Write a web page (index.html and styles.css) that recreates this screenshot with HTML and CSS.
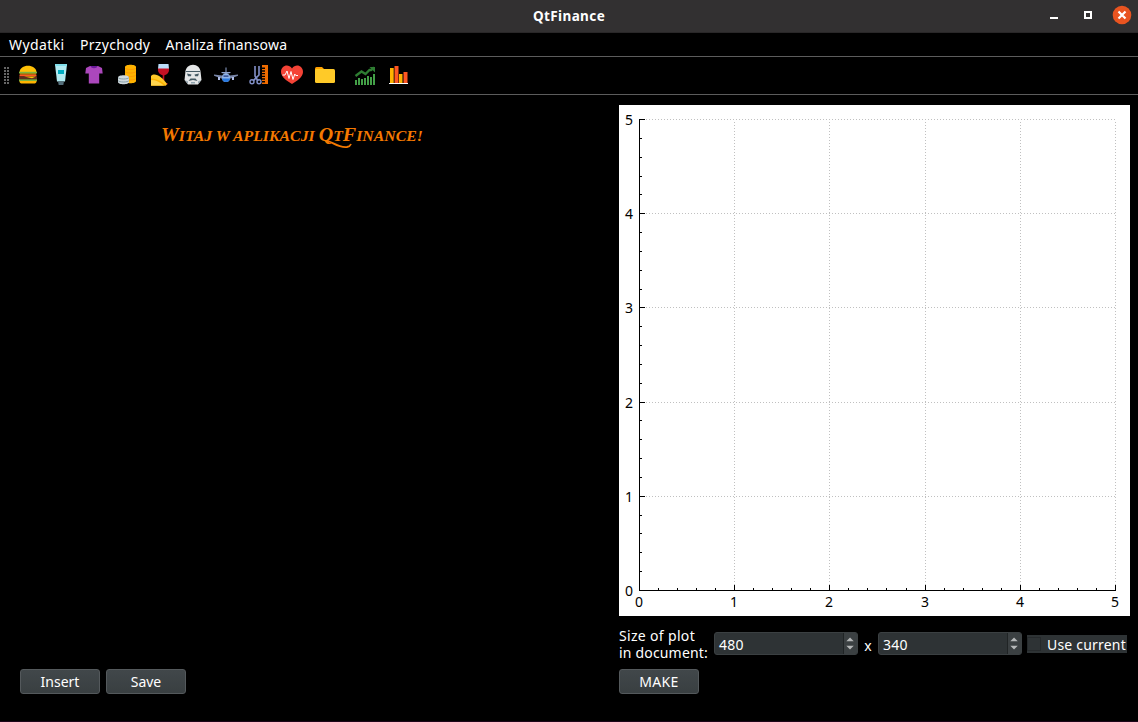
FILE: index.html
```html
<!DOCTYPE html>
<html lang="pl">
<head>
<meta charset="utf-8">
<title>QtFinance</title>
<link rel="stylesheet" href="styles.css">
</head>
<body>
<div class="window">
  <header class="titlebar">
    <span></span>
    <h1 class="title">QtFinance</h1>
    <div class="controls">
      <svg width="100" height="33" viewBox="0 0 100 33">
        <path fill="#fff" d="M12 17h8v2h-8z"/>
        <path fill="none" stroke="#fff" stroke-width="2" d="M47 12h6v6h-6z"/>
        <circle cx="84" cy="15" r="9.3" fill="#e95420"/>
        <path stroke="#fff" stroke-width="2.2" d="M80.5 11.5l7 7m0-7l-7 7"/>
      </svg>
    </div>
  </header>
  <nav class="menubar"><span class="menu m1">Wydatki</span><span class="menu m2">Przychody</span><span class="menu m3">Analiza finansowa</span></nav>
  <div class="toolbar">
    <svg class="grip" width="6" height="17" viewBox="0 0 6 17"><path fill="#666" d="M0 0h2v2H0zM3 0h2v2H3zM0 3h2v2H0zM3 3h2v2H3zM0 6h2v2H0zM3 6h2v2H3zM0 9h2v2H0zM3 9h2v2H3zM0 12h2v2H0zM3 12h2v2H3zM0 15h2v2H0zM3 15h2v2H3z"/></svg>
    <!-- food -->
    <svg class="icon" viewBox="0 0 24 24"><path fill="#ffc107" d="M3.5 9.500c0-9 17-9 17 0z"/><path fill="#7cb342" d="M3 8.800h18v1.700H3z"/><path fill="#ffc107" d="M4 10.500h16v1H4z"/><path fill="#ff5722" d="M3.5 11.500h17v2h-17z"/><path fill="#5d2e1f" d="M3 13.500h18v3H3z"/><path fill="#ffc107" d="M8 13.500h12l-4 1.800z"/><path fill="#7cb342" d="M3 16.300h18v2H3z"/><path fill="#ffb300" d="M3.500 18h17c0 2-1 2.500-3 2.500h-11c-2 0-3-.5-3-2.500z"/></svg>
    <!-- cosmetics -->
    <svg class="icon" viewBox="0 0 24 24"><path fill="#b2ebf2" d="M6 1.500h12l-2 17H8z"/><path fill="#80deea" d="M6 1h12v2H6z"/><path fill="#00acc1" d="M9 7h6v4H9z"/><path fill="#546e7a" d="M9 18.500h6l-.7 3.500H9.700z"/></svg>
    <!-- clothes -->
    <svg class="icon" viewBox="0 0 24 24"><path fill="#ab47bc" d="M8 3h8l4 2 .7 5.500h-3.500V20.500H6.800V10.500H3.300L4 5z"/><path fill="#6a1b9a" d="M8.500 3h7c-.5 3-6.500 3-7 0z"/></svg>
    <!-- coins -->
    <svg class="icon" viewBox="0 0 24 24"><path fill="#ffb300" d="M10 4c0-3 11-3 11 0v14c0 3-11 3-11 0z"/><path fill="none" stroke="#ff8f00" stroke-width=".7" d="M10 5c1 2 10 2 11 0M10 8.500c1 2 10 2 11 0M10 12c1 2 10 2 11 0M10 15.500c1 2 10 2 11 0"/><path fill="#cfd8dc" d="M3 14.500c0-3 11-3 11 0V19c0 3-11 3-11 0z"/><path fill="none" stroke="#78909c" stroke-width=".8" d="M3 14.500c1 2 10 2 11 0M3 17.500c1 2 10 2 11 0"/></svg>
    <!-- wine and cheese -->
    <svg class="icon" viewBox="0 0 24 24"><path fill="#bbdefb" d="M10.500 1h10l.5 5H10z"/><path fill="#c51124" d="M10 5.500h11c1 9-12 9-11 0z"/><path stroke="#c51124" stroke-width="1.600" d="M15.500 10v10M12.500 20.800h7"/><path fill="#ffc928" d="M3 13c4-4 11 1 16 8l-1 1.500H3z"/><path fill="#ffb300" d="M3 15.500c5 0 10 2 15 7H3z"/><path fill="#ffd54f" d="M3 17c5 0 9 2 13 5.500H3z"/></svg>
    <!-- entertainment -->
    <svg class="icon" viewBox="0 0 24 24"><path fill="#e4e6e7" d="M4.300 10c0-11 15.400-11 15.400 0l.8 7-3.500 4.500H7L3.500 17z"/><path fill="#455a64" d="M4.800 8h14.400v1H4.800zM6 10.500l4.500 1-.6 1.800H7zM18 10.500l-4.500 1 .6 1.800H17zM9.500 15.500h5l2 2.500-4.500-1-4.500 1z"/><path fill="#90a4ae" d="M4 17l3 1.500V21zM20 17l-3 1.500V21zM10 19h4v1.500h-4z"/></svg>
    <!-- travel -->
    <svg class="icon" viewBox="0 0 24 24"><path fill="#90a4ce" d="M11.500 4.500h1V10h-1zM7.500 9h9v1l-4.500 1-4.500-1z"/><path fill="#7986a8" d="M0 11.500l12 1.500 12-1.500v1.300L14 16.500h-4L0 12.800z"/><ellipse cx="12" cy="14.800" rx="4" ry="4.200" fill="#90b4e8"/><path fill="#2979e0" d="M8 15.500h8c-.5 4.700-7.500 4.700-8 0z"/><path fill="#1a347c" d="M9.500 12.500h5v1.200h-5z"/><path fill="#b0bee8" d="M4 14h2v3H4zM18 14h2v3h-2z"/></svg>
    <!-- hairdresser -->
    <svg class="icon" viewBox="0 0 24 24"><path fill="none" stroke="#8290c8" stroke-width="1.600" d="M8 3v10l3 5M12 3v9l-6 6"/><circle cx="5" cy="18.800" r="2" fill="none" stroke="#8290c8" stroke-width="1.400"/><circle cx="12" cy="18.800" r="2" fill="none" stroke="#8290c8" stroke-width="1.400"/><path fill="#ef6c00" d="M18 2h3v19h-6v-1.500h3V18h-3v-1.300h3v-1.400h-3V14h3v-1.300h-3v-1.400h3V10h-3V8.700h3V7.300h-3V6h3V4.500h-3V2z"/></svg>
    <!-- health -->
    <svg class="icon" viewBox="0 0 24 24"><path fill="#f44336" d="M12 5.500C8 0 1 3 1 9c0 5 6 9 11 12.000C17 18 23 14 23 9c0-6-7-9-11-3.500z"/><path fill="none" stroke="#fff" stroke-width="1" d="M2.500 12h2.500L7 8l2 7.500 2-7 2 8 1.800-5.500 1 1.500H18"/></svg>
    <!-- other -->
    <svg class="icon folder" viewBox="0 0 24 24"><path fill="#ffa000" d="M2 5.500Q2 4 3.500 4H9l2 2v5H2z"/><path fill="#ffca28" d="M3.500 6h17Q22 6 22 7.500v11q0 1.500-1.500 1.500h-17Q2 20 2 18.500v-11Q2 6 3.500 6z"/></svg>
    <!-- growth chart -->
    <svg class="icon" viewBox="0 0 24 24"><path fill="#43a047" d="M2 17h2v5H2zM5 15h2v7H5zM8 16h2v6H8zM11 15h2v7h-2zM14 13h2v9h-2zM17 14h2v8h-2zM20 11h2v11h-2z"/><path fill="none" stroke="#2e7d32" stroke-width="2.300" d="M2.500 13l6-4.500 4 2.500 4-4H18l3-2.500"/><path fill="#2e7d32" d="M16.500 4H22v5.500z"/></svg>
    <!-- bar chart -->
    <svg class="icon" viewBox="0 0 24 24"><path fill="#ffb300" d="M4 5h3.700v15H4zM13 11h3.500v9H13z"/><path fill="#ff5722" d="M8.500 3h4v17h-4zM17.500 9h4v11h-4z"/><path fill="#fff" d="M3 20h19v1H3z"/></svg>
  </div>
  <main class="content">
    <section class="document">
      <h2 class="welcome"><svg width="264" height="30" viewBox="0 0 264 30"><text class="welcome-text" x="0" y="19" textLength="262" lengthAdjust="spacingAndGlyphs"><tspan class="cap">W</tspan>ITAJ W APLIKACJI <tspan class="cap">Q</tspan>T<tspan class="cap">F</tspan>INANCE!</text><path class="swash" d="M166 18.500C173 21 178 26 186 25q3-.5 4-3"/></svg></h2>
      <div class="actions"><button class="button">Insert</button><button class="button">Save</button></div>
    </section>
    <section class="plot-panel">
      <svg class="plot" width="511" height="511" viewBox="0 0 511 511" shape-rendering="crispEdges">
        <path fill="#fff" d="M0 0h511v511H0z"/>
        <path class="grid" d="M27 14.500H497M27 108.500H497M27 202.500H497M27 297.500H497M27 391.500H497M115.500 17V480M210.500 17V480M306.500 17V480M401.500 17V480M496.500 17V480"/>
        <path class="axis" d="M20.500 14V486M20 485.500H497M20 14.500h6M20 108.500h6M20 202.500h6M20 297.500h6M20 391.500h6M115.500 480v6M210.500 480v6M306.500 480v6M401.500 480v6M496.500 480v6"/>
        <path class="axis" d="M20 33.500h3M20 52.500h3M20 71.500h3M20 89.500h3M20 127.500h3M20 146.500h3M20 165.500h3M20 184.500h3M20 221.500h3M20 240.500h3M20 259.500h3M20 278.500h3M20 315.500h3M20 334.500h3M20 353.500h3M20 372.500h3M20 410.500h3M20 428.500h3M20 447.500h3M20 466.500h3M39.500 483v3M58.500 483v3M77.500 483v3M96.500 483v3M134.500 483v3M153.500 483v3M172.500 483v3M191.500 483v3M229.500 483v3M248.500 483v3M267.500 483v3M287.500 483v3M325.500 483v3M344.500 483v3M363.500 483v3M382.500 483v3M420.500 483v3M439.500 483v3M458.500 483v3M477.500 483v3"/>
        <g class="labels"><text x="10" y="20">5</text><text x="10" y="114">4</text><text x="10" y="208">3</text><text x="10" y="303">2</text><text x="10" y="397">1</text><text x="10" y="491">0</text><text x="20" y="502">0</text><text x="115" y="502">1</text><text x="210" y="502">2</text><text x="306" y="502">3</text><text x="401" y="502">4</text><text x="496" y="502">5</text></g>
      </svg>
      <div class="size-row">
        <div class="size-label"><span class="line1">Size of plot</span><br><span class="line2">in document:</span></div>
        <div class="spin"><span class="value">480</span><svg class="arrows" width="14" height="21" viewBox="0 0 14 21"><path fill="#b5b7b8" d="M2.500 8L6.500 4l4 4zM2.500 13h8l-4 4z"/></svg></div>
        <span class="times">x</span>
        <div class="spin"><span class="value">340</span><svg class="arrows" width="14" height="21" viewBox="0 0 14 21"><path fill="#b5b7b8" d="M2.500 8L6.500 4l4 4zM2.500 13h8l-4 4z"/></svg></div>
        <div class="check"><span class="box"></span><span class="check-label">Use current</span></div>
      </div>
      <button class="button make">MAKE</button>
    </section>
  </main>
</div>
</body>
</html>
```
FILE: styles.css
```css
* { box-sizing: border-box; }
body { margin: 0; background: #000; color: #fff; font-family: "Noto Sans", sans-serif; font-size: 14px; }
.window { width: 1138px; height: 722px; display: flex; flex-direction: column; overflow: hidden; border-bottom: 1px solid #1c0519; }
.titlebar { height: 33px; background: #323031; display: grid; grid-template-columns: 1fr auto 1fr; border-bottom: 1px solid #292728; }
.title { margin: 0; font-size: 13.5px; line-height: 32px; font-weight: 700; letter-spacing: 0.4px; }
.controls { display: flex; justify-content: flex-end; }
.menubar { height: 24px; display: flex; padding-left: 9px; border-bottom: 1px solid #5c5c5c; line-height: 23px; }
.menu { white-space: nowrap; }
.m1 { width: 71px; letter-spacing: 0.4px; }
.m2 { width: 85.500px; letter-spacing: 0.3px; }
.m3 { letter-spacing: 0.22px; }
.toolbar { height: 38px; display: flex; align-items: center; gap: 9px; padding-left: 4px; border-bottom: 1px solid #5c5c5c; }
.grip { margin-right: -3px; }
.icon { width: 24px; height: 24px; flex: none; position: relative; top: -0.5px; }
.folder { margin-right: 7px; }
.content { flex: 1; display: flex; min-height: 0; }
.document { width: 619px; display: flex; flex-direction: column; justify-content: space-between; padding: 27px 35px 27px 20px; }
.welcome { margin: 0 0 0 141px; height: 30px; }
.welcome-text { fill: #f57900; font: italic bold 15px "Liberation Serif", serif; }
.cap { font-size: 19px; }
.swash { fill: none; stroke: #f57900; stroke-width: 1.8; }
.actions { display: flex; gap: 6px; }
.button { width: 80px; height: 25px; padding: 0; border: 1px solid #54595c; border-radius: 3px; background: linear-gradient(#41474a, #393f41); color: #fff; font: 14px/22px "Noto Sans", sans-serif; }
.make { letter-spacing: 0.3px; }
.plot-panel { padding-top: 10px; width: 511px; display: flex; flex-direction: column; }
.plot { display: block; }
.grid { fill: none; stroke: #c0c0c0; stroke-dasharray: 1 2; }
.axis { fill: none; stroke: #000; }
.labels { font: 14px "Noto Sans", sans-serif; fill: #000; text-anchor: middle; }
.size-row { height: 53px; display: flex; padding-top: 11px; }
.size-label { width: 95px; line-height: 17px; white-space: nowrap; }
.line1 { letter-spacing: 0.33px; }
.line2 { letter-spacing: 0.18px; }
.spin { width: 144px; height: 23px; margin-top: 5px; display: flex; justify-content: space-between; border: 1px solid #3b4042; border-radius: 3px; background: #2e3335; overflow: hidden; }
.value { padding-left: 4px; line-height: 23px; letter-spacing: 0.3px; }
.arrows { background: #3b4042; border-left: 1px solid #202425; }
.times { width: 20px; text-align: center; line-height: 37px; }
.check { width: 100px; height: 18px; margin: 8px 0 0 5px; background: #2e3335; display: flex; align-items: center; gap: 6px; white-space: nowrap; }
.box { width: 14px; height: 14px; border: 1px solid #25292b; }
.check-label { line-height: 20px; letter-spacing: 0.2px; padding-top: 1px; }
```
